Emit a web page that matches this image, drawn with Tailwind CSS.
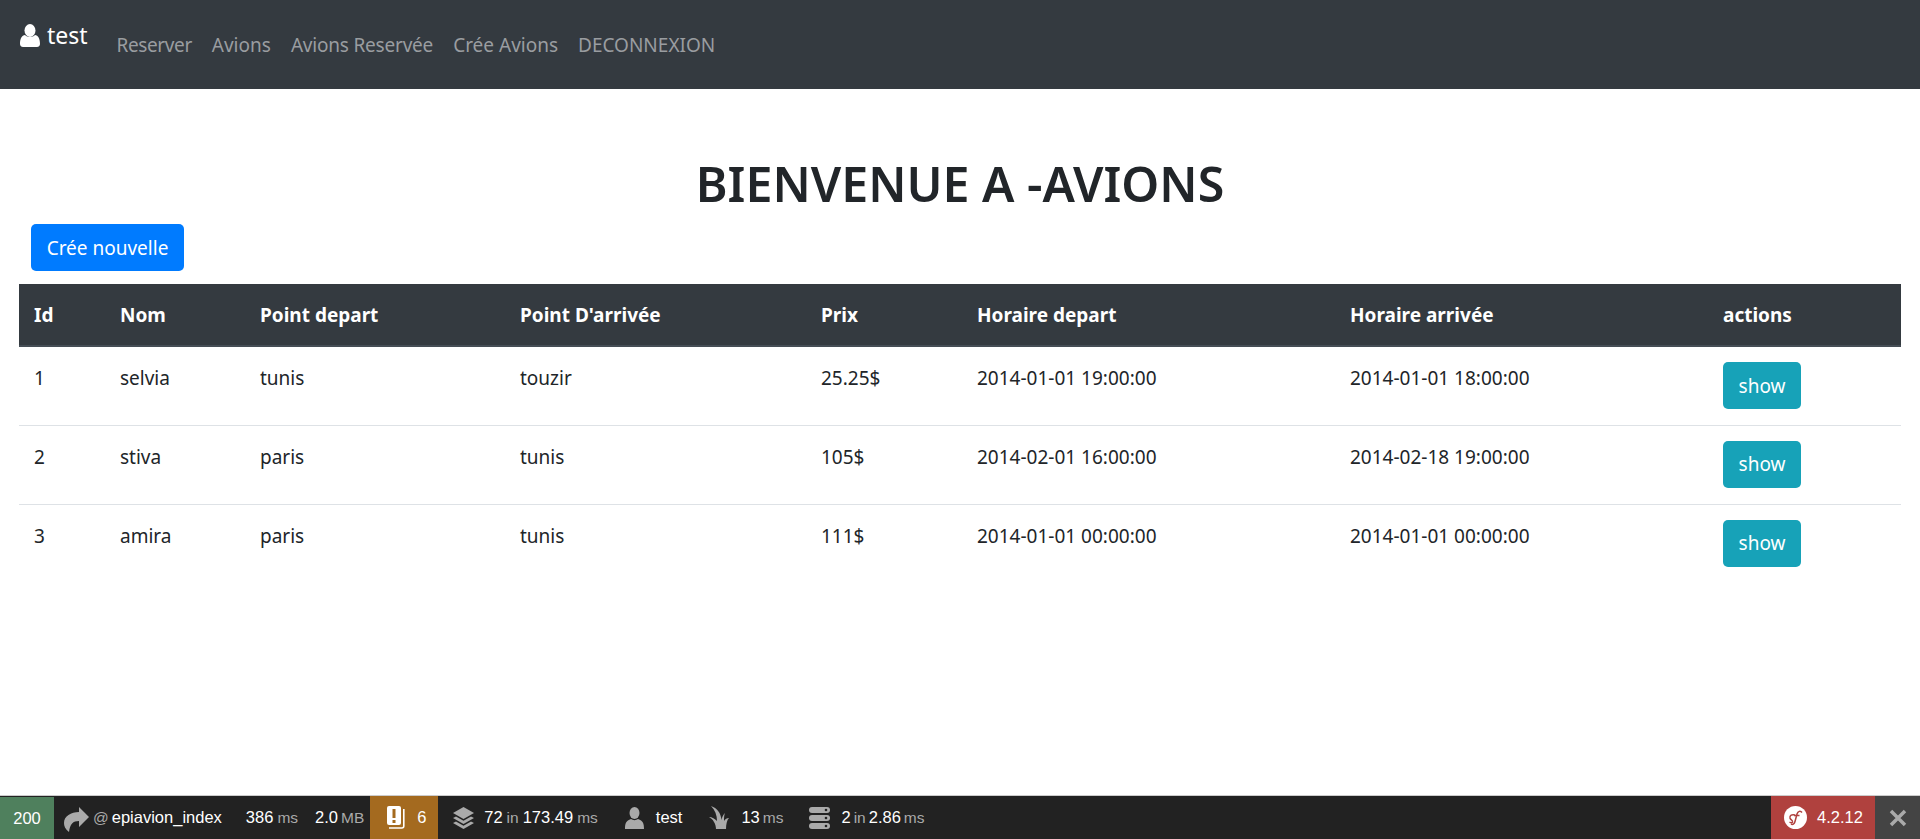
<!DOCTYPE html>
<html lang="en">
<head>
<meta charset="UTF-8">
<title>Avions</title>
<script src="https://cdn.jsdelivr.net/npm/@tailwindcss/browser@4"></script>
</head>
<body class="bg-white text-[#212529] font-['Noto_Sans',sans-serif] text-[19px] leading-[30px] h-[839px] overflow-hidden flex flex-col">
<nav class="bg-[#343a40] h-[89px] flex items-start px-5 shrink-0">
  <a class="flex items-center text-white text-[23px] leading-[38px] mt-[16px] mr-[29px]">
    <svg class="w-[20px] h-[23px] mr-[7px]" viewBox="0 0 20 23"><ellipse cx="10" cy="6.500" rx="5.500" ry="6.500" fill="#fff"/><path d="M0 20c0-6 2-8.500 5-9 1.500 1.500 3 2 5 2s3.500-.5 5-2c3 .5 5 3 5 9 0 2-1.500 3-3 3H3c-1.500 0-3-1-3-3z" fill="#fff"/></svg>
    test
  </a>
  <ul class="flex text-[#9a9da0] mt-[30px] gap-5">
    <li class="tracking-[-0.4px]">Reserver</li><li>Avions</li><li class="tracking-[-0.2px]">Avions Reservée</li><li>Crée Avions</li><li>DECONNEXION</li>
  </ul>
</nav>
<main class="flex-1 min-h-0 px-[19px]">
  <h1 class="text-center text-[48.300px] font-semibold leading-[60px] mt-[64px] h-[71px]">BIENVENUE A -AVIONS</h1>
  <a class="inline-flex items-center justify-center ml-[12px] w-[153px] h-[47px] rounded-[5px] bg-[#007bff] text-white">Crée nouvelle</a>
  <table class="mt-[13px] w-[1882px] table-fixed border-collapse">
    <colgroup><col class="w-[86px]"><col class="w-[140px]"><col class="w-[260px]"><col class="w-[301px]"><col class="w-[156px]"><col class="w-[373px]"><col class="w-[373px]"><col></colgroup>
    <thead class="bg-[#343a40] text-white text-left">
      <tr class="h-[62px] border-b-2 border-[#454d55]"><th class="px-[15px] font-bold">Id</th><th class="px-[15px] font-bold">Nom</th><th class="px-[15px] font-bold">Point depart</th><th class="px-[15px] font-bold">Point D'arrivée</th><th class="px-[15px] font-bold">Prix</th><th class="px-[15px] font-bold">Horaire depart</th><th class="px-[15px] font-bold">Horaire arrivée</th><th class="px-[15px] font-bold">actions</th></tr>
    </thead>
    <tbody>
      <tr class="h-[79px] border-b border-[#dee2e6] align-top"><td class="px-[15px] pt-[16px]">1</td><td class="px-[15px] pt-[16px]">selvia</td><td class="px-[15px] pt-[16px]">tunis</td><td class="px-[15px] pt-[16px]">touzir</td><td class="px-[15px] pt-[16px]">25.25$</td><td class="px-[15px] pt-[16px]">2014-01-01 19:00:00</td><td class="px-[15px] pt-[16px]">2014-01-01 18:00:00</td><td class="px-[15px] pt-[15px]"><a class="flex items-center justify-center w-[78px] h-[47px] rounded-[5px] bg-[#17a2b8] text-white">show</a></td></tr>
      <tr class="h-[79px] border-b border-[#dee2e6] align-top"><td class="px-[15px] pt-[16px]">2</td><td class="px-[15px] pt-[16px]">stiva</td><td class="px-[15px] pt-[16px]">paris</td><td class="px-[15px] pt-[16px]">tunis</td><td class="px-[15px] pt-[16px]">105$</td><td class="px-[15px] pt-[16px]">2014-02-01 16:00:00</td><td class="px-[15px] pt-[16px]">2014-02-18 19:00:00</td><td class="px-[15px] pt-[15px]"><a class="flex items-center justify-center w-[78px] h-[47px] rounded-[5px] bg-[#17a2b8] text-white">show</a></td></tr>
      <tr class="h-[79px] align-top"><td class="px-[15px] pt-[16px]">3</td><td class="px-[15px] pt-[16px]">amira</td><td class="px-[15px] pt-[16px]">paris</td><td class="px-[15px] pt-[16px]">tunis</td><td class="px-[15px] pt-[16px]">111$</td><td class="px-[15px] pt-[16px]">2014-01-01 00:00:00</td><td class="px-[15px] pt-[16px]">2014-01-01 00:00:00</td><td class="px-[15px] pt-[15px]"><a class="flex items-center justify-center w-[78px] h-[47px] rounded-[5px] bg-[#17a2b8] text-white">show</a></td></tr>
    </tbody>
  </table>
</main>
<footer class="h-[43px] shrink-0 bg-[#222] shadow-[0_-1px_0_rgba(0,0,0,0.2)] flex items-stretch font-['Liberation_Sans',sans-serif] text-[16.5px] text-white leading-[43px] whitespace-nowrap">
  <div class="w-[54px] mt-[1px] bg-[#4f805d] text-center">200</div>
  <div class="flex items-center ml-[10px]">
    <svg class="w-[25px] h-[25px] mr-[4px] mt-[3px]" viewBox="0 0 25 25"><path d="M15 0L25 10 15 20V14C9 14 6 17 5 25 1 22 0 19 0 16 0 9 7 5 15 5Z" fill="#aaa"/></svg>
    <span class="text-[#aaa] text-[15.500px] mr-[3px]">@</span><span>epiavion_index</span>
  </div>
  <div class="flex items-center ml-[24px]">386<span class="text-[#aaa] text-[15.500px] ml-[4px]">ms</span></div>
  <div class="flex items-center ml-[17px]">2.0<span class="text-[#aaa] text-[15.500px] ml-[3px]">MB</span></div>
  <div class="flex items-center ml-[6px] w-[68px] bg-[#a46a1f] pl-[17px]">
    <svg class="w-[18px] h-[23px]" viewBox="0 0 18 23"><rect width="14" height="19" rx="2" fill="#fff"/><rect x="5.500" y="3" width="3" height="9" fill="#a46a1f"/><rect x="5.500" y="14" width="3" height="3" fill="#a46a1f"/><path d="M16.800 3v17a2 2 0 0 1-2 2H2" stroke="#fff" stroke-width="1.600" fill="none"/></svg>
    <span class="ml-[12px]">6</span>
  </div>
  <div class="flex items-center ml-[14px]">
    <svg class="w-[23px] h-[24px]" viewBox="0 0 23 24"><path d="M11.500 1L22 7l-10.500 6L1 7z" fill="#aaa"/><path d="M1 12l3-1.500 7.500 4.300 7.500-4.300 3 1.500-10.500 6zM1 17l3-1.500 7.500 4.300 7.500-4.300 3 1.500-10.500 6z" fill="#aaa"/></svg>
    <span class="ml-[9px]">72</span><span class="text-[#aaa] text-[15.500px] mx-[4px]">in</span><span>173.49</span><span class="text-[#aaa] text-[15.500px] ml-[4px]">ms</span>
  </div>
  <div class="flex items-center ml-[27px]">
    <svg class="w-[19px] h-[22px]" viewBox="0 0 19 22"><ellipse cx="9.500" cy="6" rx="5" ry="6" fill="#aaa"/><path d="M0 22c0-6 1-8 6-10 2 1.500 5 1.500 7 0 5 2 6 4 6 10z" fill="#aaa"/></svg>
    <span class="ml-[12px]">test</span>
  </div>
  <div class="flex items-center ml-[27px]">
    <svg class="w-[20px] h-[23px]" viewBox="0 0 20 23"><path d="M2 0C8 2 12 7 12.500 14 13 11 14 9 16 7 15 9 15 12 15 15 16 13 18 12 20 12 18 14 17 18 17 23H7C7 18 4 13 0 11 3 11 6 13 8 15 8 9 6 4 2 0Z" fill="#aaa"/></svg>
    <span class="ml-[12px]">13</span><span class="text-[#aaa] text-[15.500px] ml-[3px]">ms</span>
  </div>
  <div class="flex items-center ml-[26px]">
    <svg class="w-[21px] h-[22px]" viewBox="0 0 21 22"><rect y="0" width="21" height="6" rx="3" fill="#aaa"/><rect y="8" width="21" height="6" rx="3" fill="#aaa"/><rect y="16" width="21" height="6" rx="3" fill="#aaa"/><circle cx="17" cy="3" r="1.300" fill="#222"/><circle cx="17" cy="11" r="1.300" fill="#222"/><circle cx="17" cy="19" r="1.300" fill="#222"/></svg>
    <span class="ml-[11px]">2</span><span class="text-[#aaa] text-[15.500px] mx-[3px]">in</span><span>2.86</span><span class="text-[#aaa] text-[15.500px] ml-[3px]">ms</span>
  </div>
  <div class="ml-auto flex items-center w-[104px] bg-[#b0413e] pl-[13px]">
    <svg class="w-[23px] h-[23px]" viewBox="0 0 23 23"><circle cx="11.500" cy="11.500" r="11.500" fill="#fff"/><path d="M18 6.500C16.500 4.500 14 5 13 8L11 15.500C10.500 18 8.500 19 7 18M10 9.500H15.500M11 9C8 8 5.500 9.500 6 12 6.500 14 9 14 8.500 16 8.200 17 7 17 5.500 16" stroke="#b0413e" stroke-width="1.500" fill="none"/></svg>
    <span class="ml-[10px]">4.2.12</span>
  </div>
  <div class="w-[45px] bg-[#444] flex items-center justify-center">
    <svg class="w-[18px] h-[18px]" viewBox="0 0 18 18"><path d="M2 2l14 14M16 2L2 16" stroke="#aaa" stroke-width="3.500"/></svg>
  </div>
</footer>
</body>
</html>
